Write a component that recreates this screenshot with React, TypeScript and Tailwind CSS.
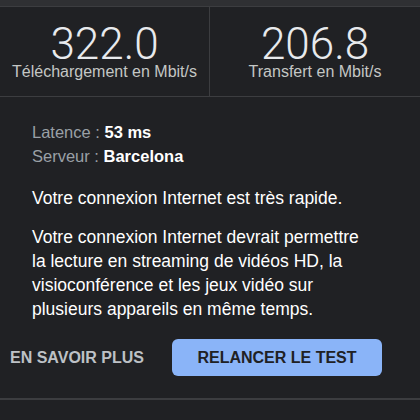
export default function App() {
  return (
    <div className="w-[420px] h-[420px] overflow-hidden bg-[#202124] text-white font-['Liberation_Sans',Arial,sans-serif]">
      <div className="h-[7px] bg-[#2f3033] border-b border-[#3c3d40]" />
      <div className="grid grid-cols-[209px_1px_1fr] h-[90px] border-b border-[#3c3d40]">
        <div className="flex flex-col items-center pt-[20px]">
          <span className="font-['Roboto',sans-serif] font-light text-[44px] leading-[34px] text-[#e8eaed]">322.0</span>
          <span className="mt-[3px] text-[16px] leading-[16px] text-[#c4c7c5]">Téléchargement en Mbit/s</span>
        </div>
        <div className="bg-[#3c3d40]" />
        <div className="flex flex-col items-center pt-[20px]">
          <span className="font-['Roboto',sans-serif] font-light text-[44px] leading-[34px] text-[#e8eaed]">206.8</span>
          <span className="mt-[3px] text-[16px] leading-[16px] text-[#c4c7c5]">Transfert en Mbit/s</span>
        </div>
      </div>
      <div className="pl-[32px] pt-[23px]">
        <div className="text-[16.5px] leading-[24px]">
          <span className="font-light text-[#9aa0a6]">Latence : </span>
          <span className="font-bold text-white">53 ms</span>
        </div>
        <div className="text-[16.5px] leading-[24px]">
          <span className="font-light text-[#9aa0a6]">Serveur : </span>
          <span className="font-bold text-white">Barcelona</span>
        </div>
        <p className="mt-[18px] text-[17.5px] leading-[24px] text-white">Votre connexion Internet est très rapide.</p>
        <p className="mt-[15px] w-[340px] text-[17.5px] leading-[24px] text-white">
          Votre connexion Internet devrait permettre la lecture en streaming de vidéos HD, la visioconférence et les jeux vidéo sur plusieurs appareils en même temps.
        </p>
      </div>
      <div className="flex items-center mt-[18px] h-[37px]">
        <button className="ml-[10px] w-[136px] text-left text-[16px] font-bold text-[#bdc1c6] whitespace-nowrap">EN SAVOIR PLUS</button>
        <button className="ml-[26px] w-[210px] h-[37px] rounded-[6px] bg-[#8ab4f8] text-[16px] font-bold text-[#202124]">RELANCER LE TEST</button>
      </div>
      <div className="mt-[22px] border-t-2 border-[#3c3d40]" />
    </div>
  );
}
